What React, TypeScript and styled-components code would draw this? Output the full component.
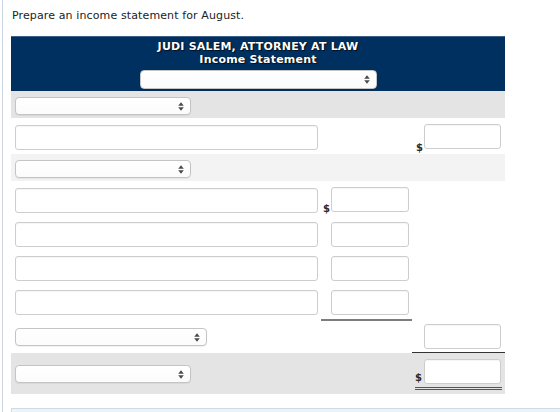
import React from "react";
import styled, { createGlobalStyle } from "styled-components";

const GlobalStyle = createGlobalStyle`
  html, body {
    margin: 0;
    padding: 0;
    background: #fff;
  }
  body {
    font-family: "DejaVu Sans", Verdana, sans-serif;
    color: #222;
  }
`;

const Page = styled.div`
  margin-left: 2px;
  border-left: 1px solid #cbd6e2;
  padding-left: 8px;
  min-height: 412px;
  box-sizing: border-box;
`;

const Intro = styled.p`
  margin: 0;
  height: 36px;
  padding: 9px 0 0 1px;
  box-sizing: border-box;
  font-size: 11px;
  line-height: 14px;
  letter-spacing: 0.12px;
  color: #222;
`;

const Sheet = styled.div`
  width: 494px;
`;

const Header = styled.div`
  background: #00305f;
  border-top: 1px solid #3d6189;
  height: 55px;
  box-sizing: border-box;
  padding-top: 3px;
  display: flex;
  flex-direction: column;
  align-items: center;
`;

const Title = styled.div`
  color: #fff;
  font-weight: bold;
  font-size: 11px;
  line-height: 13px;
  letter-spacing: 0.2px;
  text-shadow: 0 0 1px #000, 1px 1px 1px rgba(0, 0, 0, 0.6);
  text-align: center;
`;

const Row = styled.div<{ $h: number; $bg?: string }>`
  display: grid;
  grid-template-columns: 310px 91px 93px;
  height: ${(p) => p.$h}px;
  background: ${(p) => p.$bg ?? "transparent"};
`;

const Cell = styled.div<{ $top?: number; $left?: number; $rule?: "gray" | "dark" }>`
  display: flex;
  align-items: flex-start;
  box-sizing: border-box;
  padding-top: ${(p) => p.$top ?? 0}px;
  padding-left: ${(p) => p.$left ?? 0}px;
  border-bottom: ${(p) =>
    p.$rule === "gray" ? "2px solid #7d7d7d" : p.$rule === "dark" ? "1px solid #333" : "none"};
`;

const Input = styled.div<{ $w: number }>`
  width: ${(p) => p.$w}px;
  height: 25px;
  box-sizing: border-box;
  background: #fff;
  border: 1px solid #cdcdcd;
  border-radius: 3px;
  box-shadow: inset 0 1px 1px rgba(0, 0, 0, 0.04);
`;

const SelectBox = styled.div<{ $w: number; $h?: number }>`
  width: ${(p) => p.$w}px;
  height: ${(p) => p.$h ?? 18}px;
  box-sizing: border-box;
  background: linear-gradient(#fff, #fbfbfb);
  border: 1px solid #c4c4c4;
  border-radius: 4px;
  box-shadow: 0 1px 1px rgba(0, 0, 0, 0.06);
  display: flex;
  align-items: center;
  justify-content: flex-end;
  padding-right: 6px;
`;

const Dollar = styled.span<{ $w: number }>`
  width: ${(p) => p.$w}px;
  align-self: flex-end;
  font-size: 10px;
  font-weight: bold;
  line-height: 12px;
  color: #2a2a2a;
`;

const Total = styled.div`
  display: flex;
  margin-left: 3px;
  padding-right: 1px;
  padding-bottom: 3px;
  border-bottom: 3px double #555;
`;

const Footer = styled.div`
  margin-top: 14px;
  height: 12px;
  background: #eef3f8;
  border-top: 1px solid #cfdbe7;
  border-left: 1px solid #cfdbe7;
`;

const Arrows = () => (
  <svg width="6" height="9" viewBox="0 0 6 9">
    <path d="M3 0.3 L5.8 3.8 H0.2 Z" fill="#4a4a4a" />
    <path d="M3 8.7 L5.8 5.2 H0.2 Z" fill="#4a4a4a" />
  </svg>
);

const Select: React.FC<{ w: number; h?: number }> = ({ w, h }) => (
  <SelectBox $w={w} $h={h}>
    <Arrows />
  </SelectBox>
);

const Money: React.FC<{ sign?: boolean; pad: number; w: number }> = ({ sign, pad, w }) => (
  <>
    <Dollar $w={pad}>{sign ? "$" : ""}</Dollar>
    <Input $w={w} />
  </>
);

export default function App() {
  return (
    <>
      <GlobalStyle />
      <Page>
        <Intro>Prepare an income statement for August.</Intro>
        <Sheet>
          <Header>
            <Title>JUDI SALEM, ATTORNEY AT LAW</Title>
            <Title>Income Statement</Title>
            <div style={{ height: 4 }} />
            <Select w={237} h={19} />
          </Header>

          <Row $h={27} $bg="#e4e4e4">
            <Cell $top={6} $left={4}>
              <Select w={176} />
            </Cell>
          </Row>

          <Row $h={36}>
            <Cell $top={7} $left={4}>
              <Input $w={303} />
            </Cell>
            <Cell />
            <Cell $top={6} $left={4}>
              <Money sign pad={8} w={77} />
            </Cell>
          </Row>

          <Row $h={27} $bg="#f3f3f3">
            <Cell $top={6} $left={4}>
              <Select w={176} />
            </Cell>
          </Row>

          <Row $h={34}>
            <Cell $top={7} $left={4}>
              <Input $w={303} />
            </Cell>
            <Cell $top={6} $left={2}>
              <Money sign pad={8} w={78} />
            </Cell>
          </Row>

          <Row $h={34}>
            <Cell $top={7} $left={4}>
              <Input $w={303} />
            </Cell>
            <Cell $top={7} $left={2}>
              <Money pad={8} w={78} />
            </Cell>
          </Row>

          <Row $h={34}>
            <Cell $top={7} $left={4}>
              <Input $w={303} />
            </Cell>
            <Cell $top={7} $left={2}>
              <Money pad={8} w={78} />
            </Cell>
          </Row>

          <Row $h={38}>
            <Cell $top={7} $left={4}>
              <Input $w={303} />
            </Cell>
            <Cell $top={7} $left={2} $rule="gray">
              <Money pad={8} w={78} />
            </Cell>
          </Row>

          <Row $h={32}>
            <Cell $top={7} $left={4}>
              <Select w={192} />
            </Cell>
            <Cell />
            <Cell $top={3} $left={4} $rule="dark">
              <Money pad={8} w={77} />
            </Cell>
          </Row>

          <Row $h={41} $bg="#e4e4e4">
            <Cell $top={12} $left={4}>
              <Select w={176} />
            </Cell>
            <Cell />
            <Cell $top={6}>
              <Total>
                <Money sign pad={9} w={77} />
              </Total>
            </Cell>
          </Row>
        </Sheet>
        <Footer />
      </Page>
    </>
  );
}
